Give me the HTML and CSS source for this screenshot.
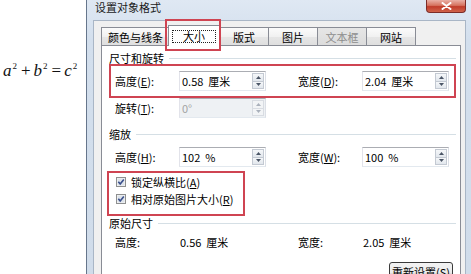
FILE: index.html
```html
<!DOCTYPE html>
<html lang="zh-CN">
<head>
<meta charset="utf-8">
<title>设置对象格式</title>
<link rel="stylesheet" href="styles.css">
</head>
<body>
<div class="page">
  <div class="formula"><i>a</i><sup>2</sup><span class="op">+</span><i>b</i><sup>2</sup><span class="op">=</span><i>c</i><sup>2</sup></div>
  <div class="window">
    <div class="titlebar">
      <span class="title">设置对象格式</span>
      <span class="close"><svg width="11" height="8" viewBox="0 0 11 8"><path d="M1.5 1 L9.5 7 M9.5 1 L1.5 7" stroke="#fff" stroke-width="2" stroke-linecap="round"/></svg></span>
    </div>
    <div class="client">
      <div class="tabs">
        <span class="tab">颜色与线条</span>
        <span class="tab active"><span class="focus">大小</span></span>
        <span class="tab">版式</span>
        <span class="tab">图片</span>
        <span class="tab disabled">文本框</span>
        <span class="tab">网站</span>
      </div>
      <div class="panel">
        <div class="gtitle">尺寸和旋转</div>
        <div class="row tall mark">
          <div class="field"><span class="lbl">高度(<u>E</u>):</span><div class="spinbox"><span>0.58  厘米</span><span class="spin"><i><svg width="5" height="3" viewBox="0 0 5 3"><path d="M0 3 L2.5 0 L5 3Z" fill="#4a5566"/></svg></i><i><svg width="5" height="3" viewBox="0 0 5 3"><path d="M0 0 L2.5 3 L5 0Z" fill="#4a5566"/></svg></i></span></div></div>
          <div class="field"><span class="lbl">宽度(<u>D</u>):</span><div class="spinbox"><span>2.04  厘米</span><span class="spin"><i><svg width="5" height="3" viewBox="0 0 5 3"><path d="M0 3 L2.5 0 L5 3Z" fill="#4a5566"/></svg></i><i><svg width="5" height="3" viewBox="0 0 5 3"><path d="M0 0 L2.5 3 L5 0Z" fill="#4a5566"/></svg></i></span></div></div>
        </div>
        <div class="row">
          <div class="field"><span class="lbl">旋转(<u>T</u>):</span><div class="spinbox disabled"><span>0°</span><span class="spin"><i><svg width="5" height="3" viewBox="0 0 5 3"><path d="M0 3 L2.5 0 L5 3Z" fill="#a9b0bb"/></svg></i><i><svg width="5" height="3" viewBox="0 0 5 3"><path d="M0 0 L2.5 3 L5 0Z" fill="#a9b0bb"/></svg></i></span></div></div>
        </div>
        <div class="gtitle g2">缩放</div>
        <div class="row r3">
          <div class="field"><span class="lbl">高度(<u>H</u>):</span><div class="spinbox"><span>102  %</span><span class="spin"><i><svg width="5" height="3" viewBox="0 0 5 3"><path d="M0 3 L2.5 0 L5 3Z" fill="#4a5566"/></svg></i><i><svg width="5" height="3" viewBox="0 0 5 3"><path d="M0 0 L2.5 3 L5 0Z" fill="#4a5566"/></svg></i></span></div></div>
          <div class="field"><span class="lbl">宽度(<u>W</u>):</span><div class="spinbox"><span>100  %</span><span class="spin"><i><svg width="5" height="3" viewBox="0 0 5 3"><path d="M0 3 L2.5 0 L5 3Z" fill="#4a5566"/></svg></i><i><svg width="5" height="3" viewBox="0 0 5 3"><path d="M0 0 L2.5 3 L5 0Z" fill="#4a5566"/></svg></i></span></div></div>
        </div>
        <div class="checks">
          <div class="check"><svg width="10" height="10" viewBox="0 0 10 10"><rect x="0.5" y="0.5" width="9" height="9" fill="#f6f6f6" stroke="#8e8f8f"/><rect x="1.5" y="1.5" width="7" height="7" fill="#dde3ea"/><path d="M2.3 4.8 L4.2 6.9 L7.8 2.5" fill="none" stroke="#3a4f8c" stroke-width="1.6"/></svg><span>锁定纵横比(<u>A</u>)</span></div>
          <div class="check"><svg width="10" height="10" viewBox="0 0 10 10"><rect x="0.5" y="0.5" width="9" height="9" fill="#f6f6f6" stroke="#8e8f8f"/><rect x="1.5" y="1.5" width="7" height="7" fill="#dde3ea"/><path d="M2.3 4.8 L4.2 6.9 L7.8 2.5" fill="none" stroke="#3a4f8c" stroke-width="1.6"/></svg><span>相对原始图片大小(<u>R</u>)</span></div>
        </div>
        <div class="gtitle g3">原始尺寸</div>
        <div class="row">
          <div class="field"><span class="lbl">高度:</span><span class="val">0.56  厘米</span></div>
          <div class="field"><span class="lbl">宽度:</span><span class="val">2.05  厘米</span></div>
        </div>
        <div class="actions"><span class="btn">重新设置(<u>S</u>)</span></div>
      </div>
    </div>
  </div>
</div>
</body>
</html>
```

FILE: styles.css
```css
* { box-sizing: border-box; }
html, body { margin: 0; padding: 0; }
body {
  width: 471px;
  height: 274px;
  overflow: hidden;
  background: #fff;
  font-family: "Noto Sans CJK SC", "Liberation Sans", sans-serif;
  font-size: 11px;
  color: #000;
}
.page { display: flex; height: 274px; }

.formula {
  flex: none;
  width: 86px;
  padding: 61px 0 0 3px;
  font-family: "Liberation Serif", serif;
  font-size: 17px;
  line-height: 20px;
  white-space: nowrap;
  color: #111;
}
.formula sup { font-size: 9px; vertical-align: 7px; line-height: 0; margin-left: 1px; }
.formula .op { margin: 0 3px 0 4px; }

.window {
  flex: none;
  width: 386px;
  height: 274px;
  display: flex;
  flex-direction: column;
  background: linear-gradient(#dfe8f3, #d3dfed 40px, #d0dcea);
  border-left: 1px solid #66768c;
  padding: 0 6px;
}
.titlebar {
  flex: none;
  height: 20px;
  display: flex;
  justify-content: space-between;
  align-items: flex-start;
}
.title { margin-left: 2px; line-height: 14px; color: #1a1a1a; }
.close {
  width: 40px;
  height: 13px;
  border: 1px solid #7c2c27;
  border-top: none;
  border-radius: 0 0 4px 4px;
  background: linear-gradient(#eab0a6, #d6735f 45%, #c13c2a 55%, #d0634b);
  display: flex;
  align-items: center;
  justify-content: center;
}

.client {
  flex: 1;
  display: flex;
  flex-direction: column;
  background: #f0f0f0;
  border: 1px solid #a9b6c6;
  border-bottom: none;
  padding: 4px 4px 0 7px;
}
.tabs { display: flex; align-items: flex-end; height: 20px; flex: none; }
.tab {
  height: 18px;
  min-width: 50px;
  padding: 0 6px;
  margin-left: -1px;
  display: flex;
  align-items: center;
  justify-content: center;
  border: 1px solid #898c95;
  border-bottom: none;
  background: linear-gradient(#fbfbfb, #f1f1f1 50%, #e6e6e6 51%, #dfdfdf);
  line-height: 14px;
}
.tab:first-child { margin-left: 0; }
.tab.disabled { color: #8d8d8d; background: linear-gradient(#e6e6e6, #dcdcdc); }
.tab.active {
  position: relative;
  z-index: 1;
  height: 21px;
  min-width: 0;
  margin: 0 0 -1px -2px;
  padding: 0 3px;
  background: #fff;
}
.tab.active::after {
  content: "";
  position: absolute;
  left: -4px;
  right: -2px;
  top: -7px;
  bottom: -5px;
  border: 2px solid #cf4452;
}
.focus {
  display: inline-block;
  border: 1px dotted #222;
  padding: 0 10px;
  line-height: 11px;
}

.panel {
  flex: 1;
  background: #fff;
  border: 1px solid #898c95;
  padding: 0 4px 0 7px;
}
.gtitle {
  display: flex;
  align-items: center;
  height: 14px;
  line-height: 14px;
  margin-top: 5px;
}
.gtitle::after {
  content: "";
  flex: 1;
  height: 1px;
  margin-left: 5px;
  background: #d5dfe5;
}
.gtitle.g2 { margin-top: 7px; }
.gtitle.g3 { margin-top: 2px; }

.row {
  display: flex;
  align-items: center;
  height: 24px;
  margin: 0 2px;
  padding-left: 4px;
}
.row.tall { height: 30px; margin-top: 1px; }
.row.r3 { margin-top: 4px; }
.mark { outline: 2px solid #cf4452; }
.field { display: flex; align-items: center; }
.field + .field { margin-left: 32px; }
.lbl { width: 64px; flex: none; }
.val { width: 87px; padding-left: 1px; white-space: pre; }

.spinbox {
  width: 87px;
  height: 20px;
  display: flex;
  align-items: center;
  justify-content: space-between;
  padding: 0 1px 0 2px;
  border: 1px solid;
  border-color: #abadb3 #dbdfe6 #e3e9ef #e2e3ea;
  background: #fff;
  white-space: pre;
}
.spinbox.disabled { background: #eef1f4; color: #a3a3a3; }
.spin { display: flex; flex-direction: column; width: 12px; height: 16px; }
.spin i {
  flex: 1;
  display: flex;
  align-items: center;
  justify-content: center;
  border: 1px solid #c3c9d2;
  background: linear-gradient(#f5f7f9, #e2e7ed);
}
.spin i + i { border-top: none; }
.disabled .spin i { border-color: #d8dce2; background: #f2f4f6; }

.checks {
  width: fit-content;
  margin-top: 4px;
  padding: 0 10px 7px 7px;
  outline: 2px solid #cf4452;
}
.check { display: flex; align-items: center; gap: 5px; height: 17px; }
.check svg { flex: none; }

.actions { display: flex; justify-content: flex-end; margin: 8px 3px 0 0; }
.btn {
  height: 21px;
  padding: 0 2px;
  border: 1px solid #3a3a3a;
  border-radius: 3px;
  background: linear-gradient(#f3f3f3, #ebebeb 50%, #dddddd 51%, #d0d0d0);
  line-height: 19px;
}
```
